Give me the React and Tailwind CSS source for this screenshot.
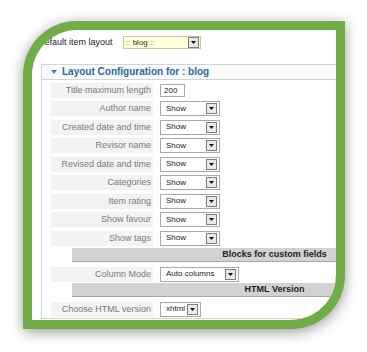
import React from 'react';

const Arrow = () => (
  <svg width="5" height="3" viewBox="0 0 5 3">
    <path d="M0 0 H5 L2.5 3 Z" fill="#111" />
  </svg>
);

const Select = ({ width, text }) => (
  <div
    className="h-[15px] border border-[#a9a9a9] bg-white flex items-center justify-between pl-[5px] pr-[2px]"
    style={{ width }}
  >
    <span className="text-[8px] leading-none text-[#1a1a1a] whitespace-nowrap">{text}</span>
    <div className="w-[11px] h-[11px] border border-[#7d7d7d] bg-[#e9e9e9] flex items-center justify-center">
      <Arrow />
    </div>
  </div>
);

const Row = ({ label, children }) => (
  <div className="flex items-center gap-[7px] h-[15px]">
    <div className="w-[102px] h-[15px] bg-[#f3f3f3] text-right pr-[2px] text-[9px] leading-[15px] text-[#7a7a7a] whitespace-nowrap">
      {label}
    </div>
    {children}
  </div>
);

const Bar = ({ title }) => (
  <div className="ml-[21px] w-[405px] h-[14px] bg-[#d2d2d2] border-b border-[#a8a8a8] text-center text-[9px] font-bold leading-[13px] text-[#222]">
    {title}
  </div>
);

export default function App() {
  const showRows = [
    'Author name',
    'Created date and time',
    'Revisor name',
    'Revised date and time',
    'Categories',
    'Item rating',
    'Show favour',
    'Show tags',
  ];

  return (
    <div className="w-[367px] h-[352px] bg-white pt-[21px] pl-[23px] font-['Liberation_Sans',Arial,sans-serif]">
      <div className="w-[322px] h-[308px] bg-[#70ad47] p-[9px] rounded-tl-[54px] rounded-br-[54px] shadow-[0_3px_14px_rgba(0,0,0,0.4)]">
        <div className="h-full bg-white rounded-tl-[45px] rounded-br-[45px] overflow-hidden">
          <div className="w-[480px]">
            {/* default layout */}
            <div className="flex items-center pt-[6px] pl-[6px]">
              <div className="w-[85px] text-[9px] text-[#222] whitespace-nowrap">Default item layout</div>
              <div className="h-[13px] w-[78px] border border-[#c8c8a0] bg-[#ffffd9] flex items-center justify-between pl-[2px] pr-[1px]">
                <span className="text-[8px] leading-none text-[#8a8a70]">
                  :: <span className="text-[#333]">blog</span> ::
                </span>
                <div className="w-[11px] h-[11px] border border-[#7d7d7d] bg-[#e9e9e9] flex items-center justify-center">
                  <Arrow />
                </div>
              </div>
            </div>

            {/* panel */}
            <div className="ml-[9px] mt-[14px] w-[460px] border border-[#d4d4d4]">
              <div className="h-[15px] border-b border-[#d4d4d4] bg-[#fbfbfb] flex items-center pl-[9px]">
                <svg width="6" height="4" viewBox="0 0 6 4" className="mr-[5px]">
                  <path d="M0 0 H6 L3 4 Z" fill="#2f86c6" />
                </svg>
                <span className="text-[10px] font-bold text-[#1f6aa8] leading-none">Layout Configuration for : blog</span>
              </div>

              <div className="pl-[9px] pt-[3px] pb-[1px]">
                <div className="flex flex-col gap-[3.5px]">
                  <Row label="Title maximum length">
                    <div className="w-[25px] h-[13px] border border-[#a9a9a9] bg-white pl-[3px] text-[8px] leading-[11px] text-[#1a1a1a]">200</div>
                  </Row>
                  {showRows.map((l) => (
                    <Row key={l} label={l}>
                      <Select width="60px" text="Show" />
                    </Row>
                  ))}
                </div>

                <div className="mt-[2px]">
                  <Bar title="Blocks for custom fields" />
                </div>
                <div className="mt-[5px]">
                  <Row label="Column Mode">
                    <Select width="79px" text="Auto columns" />
                  </Row>
                </div>
                <div className="mt-[1px]">
                  <Bar title="HTML Version" />
                </div>
                <div className="mt-[5px]">
                  <Row label="Choose HTML version">
                    <Select width="41px" text="xhtml" />
                  </Row>
                </div>
              </div>
            </div>
          </div>
        </div>
      </div>
    </div>
  );
}
